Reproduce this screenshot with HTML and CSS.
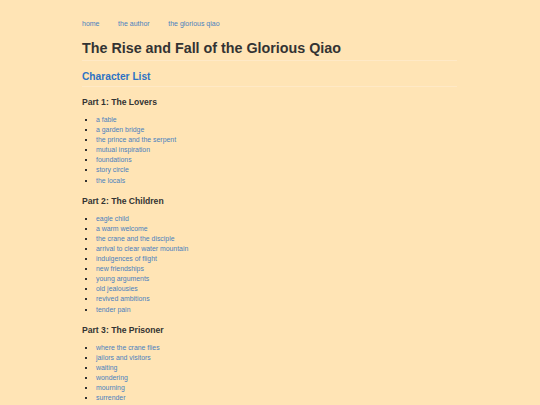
FILE: index.html
```html
<!DOCTYPE html>
<html>
<head>
<meta charset="utf-8">
<link rel="stylesheet" href="styles.css">
</head>
<body>
<div class="page">
  <nav class="nav">
    <a href="#">home</a>
    <a href="#">the author</a>
    <a href="#">the glorious qiao</a>
  </nav>
  <h1 class="title">The Rise and Fall of the Glorious Qiao</h1>
  <h2 class="section">Character List</h2>
  <h3 class="part">Part 1: The Lovers</h3>
  <ul class="list">
    <li><a href="#">a fable</a></li>
    <li><a href="#">a garden bridge</a></li>
    <li><a href="#">the prince and the serpent</a></li>
    <li><a href="#">mutual inspiration</a></li>
    <li><a href="#">foundations</a></li>
    <li><a href="#">story circle</a></li>
    <li><a href="#">the locals</a></li>
  </ul>
  <h3 class="part">Part 2: The Children</h3>
  <ul class="list">
    <li><a href="#">eagle child</a></li>
    <li><a href="#">a warm welcome</a></li>
    <li><a href="#">the crane and the disciple</a></li>
    <li><a href="#">arrival to clear water mountain</a></li>
    <li><a href="#">indulgences of flight</a></li>
    <li><a href="#">new friendships</a></li>
    <li><a href="#">young arguments</a></li>
    <li><a href="#">old jealousies</a></li>
    <li><a href="#">revived ambitions</a></li>
    <li><a href="#">tender pain</a></li>
  </ul>
  <h3 class="part">Part 3: The Prisoner</h3>
  <ul class="list">
    <li><a href="#">where the crane flies</a></li>
    <li><a href="#">jailors and visitors</a></li>
    <li><a href="#">waiting</a></li>
    <li><a href="#">wondering</a></li>
    <li><a href="#">mourning</a></li>
    <li><a href="#">surrender</a></li>
  </ul>
</div>
</body>
</html>
```
FILE: styles.css
```css
html, body {
  margin: 0;
  padding: 0;
  background: #ffe4b5;
}
body {
  font-family: "Liberation Sans", Arial, sans-serif;
  color: #333;
}
.page {
  width: 375px;
  margin-left: 82px;
  padding-top: 19px;
}
a {
  color: #4a7fbf;
  text-decoration: none;
}
.nav {
  display: flex;
  gap: 18.6px;
  font-size: 7px;
  line-height: 10px;
}
.title {
  font-size: 14.3px;
  line-height: 18px;
  margin: 10px 0 0;
  padding-bottom: 3px;
  border-bottom: 1px solid #ffe9c6;
  color: #333;
}
.section {
  font-size: 10.2px;
  line-height: 14px;
  margin: 9px 0 0;
  padding-bottom: 2px;
  border-bottom: 1px solid #ffe9c6;
  color: #2d72c4;
}
.part {
  font-size: 8.6px;
  line-height: 12px;
  margin: 9px 0 0;
  color: #333;
}
.list {
  list-style: square;
  margin: 7px 0 0;
  padding-left: 14px;
  font-size: 6.9px;
  line-height: 10.1px;
}
```
